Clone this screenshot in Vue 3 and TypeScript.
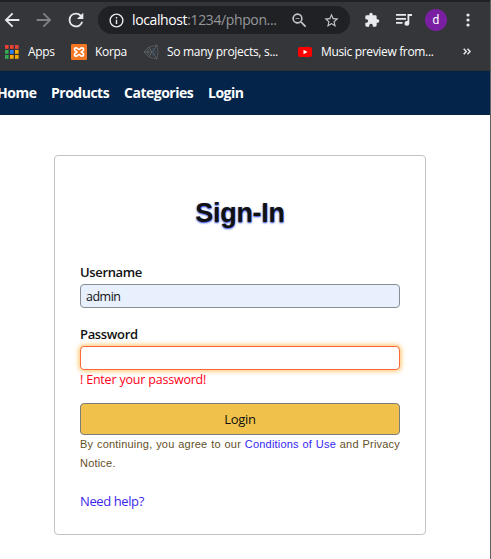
<script setup lang="ts">
import { ref } from 'vue'

interface Bookmark {
  id: string
  label: string
}

const bookmarks: Bookmark[] = [
  { id: 'apps', label: 'Apps' },
  { id: 'korpa', label: 'Korpa' },
  { id: 'projects', label: 'So many projects, s...' },
  { id: 'music', label: 'Music preview from...' },
]
const tileColors: string[] = [
  '#ea4335', '#ea4335', '#ea4335',
  '#34a853', '#2f80f5', '#f9ab00',
  '#34a853', '#f9ab00', '#f9ab00',
]
const links: string[] = ['Home', 'Products', 'Categories', 'Login']
const username = ref('admin')
const password = ref('')
</script>

<template>
  <div class="window">
    <div class="tabstrip"></div>
    <header class="toolbar">
      <svg class="back" viewBox="0 0 24 24"><path d="M20 11H7.83l5.59-5.59L12 4l-8 8 8 8 1.41-1.41L7.83 13H20z" /></svg>
      <svg class="forward" viewBox="0 0 24 24"><path d="m12 4-1.41 1.41L16.17 11H4v2h12.17l-5.58 5.59L12 20l8-8z" /></svg>
      <svg class="reload" viewBox="0 0 24 24"><path d="M17.65 6.35A7.96 7.96 0 0 0 12 4a8 8 0 1 0 7.73 10h-2.08A6 6 0 1 1 12 6c1.66 0 3.14.69 4.22 1.78L13 11h7V4z" /></svg>
      <div class="omnibox">
        <svg class="info" viewBox="0 0 24 24"><path d="M11 7h2v2h-2zm0 4h2v6h-2zm1-9a10 10 0 1 0 0 20 10 10 0 0 0 0-20m0 18a8 8 0 1 1 0-16 8 8 0 0 1 0 16" /></svg>
        <span class="url">localhost<span>:1234/phpon...</span></span>
        <svg class="lens" viewBox="0 0 24 24"><path d="M15.5 14h-.79l-.28-.27A6.5 6.5 0 1 0 13.73 14.43l.27.28v.79l5 4.99L20.49 19zm-6 0a4.5 4.5 0 1 1 0-9 4.500 4.500 0 0 1 0 9M7 9h5v1H7z" /></svg>
        <svg class="star" viewBox="0 0 24 24"><path d="m22 9.24-7.19-.62L12 2 9.19 8.63 2 9.24l5.46 4.73L5.82 21 12 17.27 18.18 21l-1.63-7.03zM12 15.4l-3.76 2.27 1-4.28-3.32-2.88 4.38-.38L12 6.1l1.71 4.04 4.38.38-3.32 2.88 1 4.28z" /></svg>
      </div>
      <svg class="puzzle" viewBox="0 0 24 24"><path d="M20.500 11H19V7a2 2 0 0 0-2-2h-4V3.500a2.500 2.500 0 0 0-5 0V5H4a2 2 0 0 0-2 2v3.800h1.500a2.700 2.700 0 0 1 0 5.400H2V20c0 1.100.9 2 2 2h3.800v-1.500a2.700 2.700 0 0 1 5.400 0V22H17a2 2 0 0 0 2-2v-4h1.500a2.500 2.500 0 0 0 0-5" /></svg>
      <svg class="queue" viewBox="0 0 16 14"><path d="M0 1h10v1.800H0zm0 4h10v1.800H0zm0 4h6.500v1.800H0zM11.500 1H16v2h-2.700v7.400a2.400 2.400 0 1 1-1.800-2.300z" /></svg>
      <div class="avatar">d</div>
      <svg class="dots" viewBox="0 0 4 14"><circle cx="2" cy="2" r="1.6" /><circle cx="2" cy="7" r="1.6" /><circle cx="2" cy="12" r="1.6" /></svg>
    </header>

    <div class="bookmarks">
      <div v-for="b in bookmarks" :key="b.id" class="bookmark" :class="b.id">
        <svg v-if="b.id === 'apps'" viewBox="0 0 14 14">
          <rect v-for="(c, n) in tileColors" :key="n" :x="(n % 3) * 5" :y="Math.floor(n / 3) * 5" width="3.6" height="3.8" :fill="c" />
        </svg>
        <svg v-else-if="b.id === 'korpa'" viewBox="0 0 16 16">
          <rect width="16" height="16" rx="1.2" fill="#f37623" />
          <path d="M5.200 7.200C2.800 6.800 3 3.800 5 3.800c1.800 0 1.800 1.700 3 1.700s1.200-1.700 3-1.700c2 0 2.200 3 0 3.600L10.300 8l.700.600c2.200.600 2 3.600 0 3.600-1.800 0-1.800-1.700-3-1.700s-1.200 1.700-3 1.700c-2 0-2.200-3 .200-3.600L5.900 8z" fill="none" stroke="#fff" stroke-width="1.700" />
        </svg>
        <svg v-else-if="b.id === 'projects'" viewBox="0 0 16 16">
          <g fill="none" stroke="#666c72" stroke-width=".8">
            <path d="M1 8 6 3l8-2 1 7-1 7-8-2z" stroke-dasharray="2 .6" />
            <path d="m6 3 3 5-3 5M14 1 9.500 8l4.500 7M1 8h8M6 5 4 8l2 3" />
            <path d="m10 4 3 4-3 4z" stroke="#3f566b" />
          </g>
        </svg>
        <svg v-else viewBox="0 0 14 10">
          <rect width="14" height="10" rx="2" fill="#f00" /><path d="m5.500 2.800 4 2.200-4 2.200z" fill="#fff" />
        </svg>
        <span>{{ b.label }}</span>
      </div>
      <svg class="more" viewBox="0 0 8 7"><path d="m.7.700 2.600 2.800L.7 6.300M4.500.700l2.600 2.800-2.600 2.800" fill="none" stroke="#e8eaed" stroke-width="1.400" /></svg>
    </div>

    <nav class="nav">
      <a v-for="l in links" :key="l" :class="l.toLowerCase()">{{ l }}</a>
    </nav>

    <main class="page">
      <form class="card" @submit.prevent>
        <h1>Sign-In</h1>
        <label for="user">Username</label>
        <input id="user" v-model="username" class="filled" type="text" />
        <label for="pass" class="second">Password</label>
        <input id="pass" v-model="password" class="invalid" type="password" />
        <p class="error">! Enter your password!</p>
        <button type="submit">Login</button>
        <p class="legal">By continuing, you agree to our <a>Conditions of Use</a> and Privacy Notice.</p>
        <a class="help">Need help?</a>
      </form>
    </main>
  </div>
</template>

<style>
body {
  margin: 0;
  overflow: hidden;
  background: #fff;
}
</style>

<style scoped>
* {
  box-sizing: border-box;
}
.window {
  width: 491px;
  height: 559px;
  border-right: 1px solid #626262;
  background: #fff;
  font-family: 'Open Sans', 'Noto Sans', sans-serif;
  overflow: hidden;
}
svg {
  display: block;
  flex: none;
  fill: #e8eaed;
}
.tabstrip {
  height: 2px;
  background: #202124;
}
.toolbar {
  height: 34px;
  padding: 2px 0 0 1px;
  display: flex;
  align-items: center;
  background: #35363a;
}
.back, .forward, .reload {
  width: 22px;
  height: 22px;
}
.forward {
  margin-left: 10px;
  fill: #808184;
}
.reload {
  margin-left: 10px;
}
.omnibox {
  width: 252px;
  height: 28px;
  margin-left: 11px;
  padding-left: 10px;
  border-radius: 14px;
  background: #202124;
  display: flex;
  align-items: center;
}
.info {
  width: 17px;
  height: 17px;
}
.url {
  flex: none;
  width: 158px;
  margin-left: 7px;
  font-size: 14px;
  line-height: 20px;
  letter-spacing: -0.38px;
  white-space: nowrap;
  color: #fff;
}
.url span {
  color: #96989b;
}
.lens {
  width: 19px;
  height: 19px;
  fill: #c3c5c8;
}
.star {
  width: 17px;
  height: 17px;
  margin-left: 14px;
  fill: #c3c5c8;
}
.puzzle {
  width: 16px;
  height: 16px;
  margin-left: 14px;
}
.queue {
  width: 16px;
  height: 14px;
  margin-left: 16px;
}
.avatar {
  width: 22px;
  height: 22px;
  margin-left: 13px;
  border-radius: 50%;
  background: #7b1fa2;
  color: #fff;
  font: 12px/22px Roboto, sans-serif;
  text-align: center;
}
.dots {
  width: 4px;
  height: 14px;
  margin-left: 19px;
}
.bookmarks {
  height: 35px;
  padding-bottom: 3px;
  display: flex;
  align-items: center;
  background: #35363a;
  border-bottom: 1px solid #2d3032;
}
.bookmark {
  display: flex;
  align-items: center;
  color: #fff;
  font-size: 12px;
  line-height: 18px;
  letter-spacing: -0.3px;
  white-space: nowrap;
}
.apps {
  width: 71px;
  padding-left: 5px;
  gap: 9px;
}
.apps svg {
  width: 14px;
  height: 14px;
}
.korpa {
  width: 72px;
  gap: 8px;
}
.korpa svg, .projects svg {
  width: 16px;
  height: 16px;
}
.projects {
  width: 155px;
  gap: 8px;
}
.music {
  width: 165px;
  gap: 9px;
  letter-spacing: -0.34px;
}
.music svg {
  width: 14px;
  height: 10px;
}
.more {
  width: 8px;
  height: 7px;
}
.nav {
  height: 44px;
  display: flex;
  align-items: center;
  background: #04244a;
  color: #fff;
  font-size: 14px;
  font-weight: 700;
  line-height: 20px;
  letter-spacing: -0.5px;
  white-space: nowrap;
}
.home {
  width: 51px;
  text-indent: -3px;
}
.products {
  width: 73px;
}
.categories {
  width: 84px;
}
.page {
  padding: 40px 0 0 54px;
}
.card {
  width: 372px;
  height: 380px;
  padding: 39px 25px 0;
  border: 1px solid #c3c3c3;
  border-radius: 4px;
  display: flex;
  flex-direction: column;
}
h1 {
  margin: 0 0 31px;
  color: #111;
  font: bold 27px/36px 'Liberation Sans', Arial, sans-serif;
  letter-spacing: -0.3px;
  text-align: center;
  text-shadow: 0 1px 2px #1d38dc;
}
label {
  height: 20px;
  margin-bottom: 2px;
  color: #111;
  font-size: 13px;
  font-weight: 600;
  line-height: 20px;
  letter-spacing: -0.35px;
}
.second {
  margin-top: 16px;
}
input {
  display: block;
  width: 320px;
  height: 24px;
  margin: 0;
  padding: 0 5px;
  border: 1px solid #8b8d94;
  border-radius: 4px;
  outline: 0;
  color: #111;
  background: #fff;
  font: 12.5px/20px 'Open Sans', sans-serif;
  letter-spacing: -0.5px;
}
.filled {
  background: #e8effd;
}
.invalid {
  border-color: #ff6938;
  box-shadow: 0 0 5px 1px #ffbd5f;
}
p {
  margin: 0;
}
.error {
  height: 33px;
  color: #ff0018;
  font-size: 12.5px;
  line-height: 20px;
  letter-spacing: -0.2px;
}
button {
  width: 320px;
  height: 32px;
  padding: 0;
  border: 1px solid #7c7c7c;
  border-radius: 4px;
  background: #f0c14b;
  color: #111;
  font: 13px/20px 'Open Sans', sans-serif;
  letter-spacing: -0.3px;
}
.legal {
  color: #62501f;
  font: 11px/19px 'Liberation Sans', Arial, sans-serif;
  letter-spacing: 0.2px;
  text-align: justify;
}
.legal a {
  color: #3525f2;
}
.help {
  margin-top: 18px;
  color: #3e28ed;
  font-size: 13px;
  line-height: 20px;
  letter-spacing: -0.4px;
}
</style>
